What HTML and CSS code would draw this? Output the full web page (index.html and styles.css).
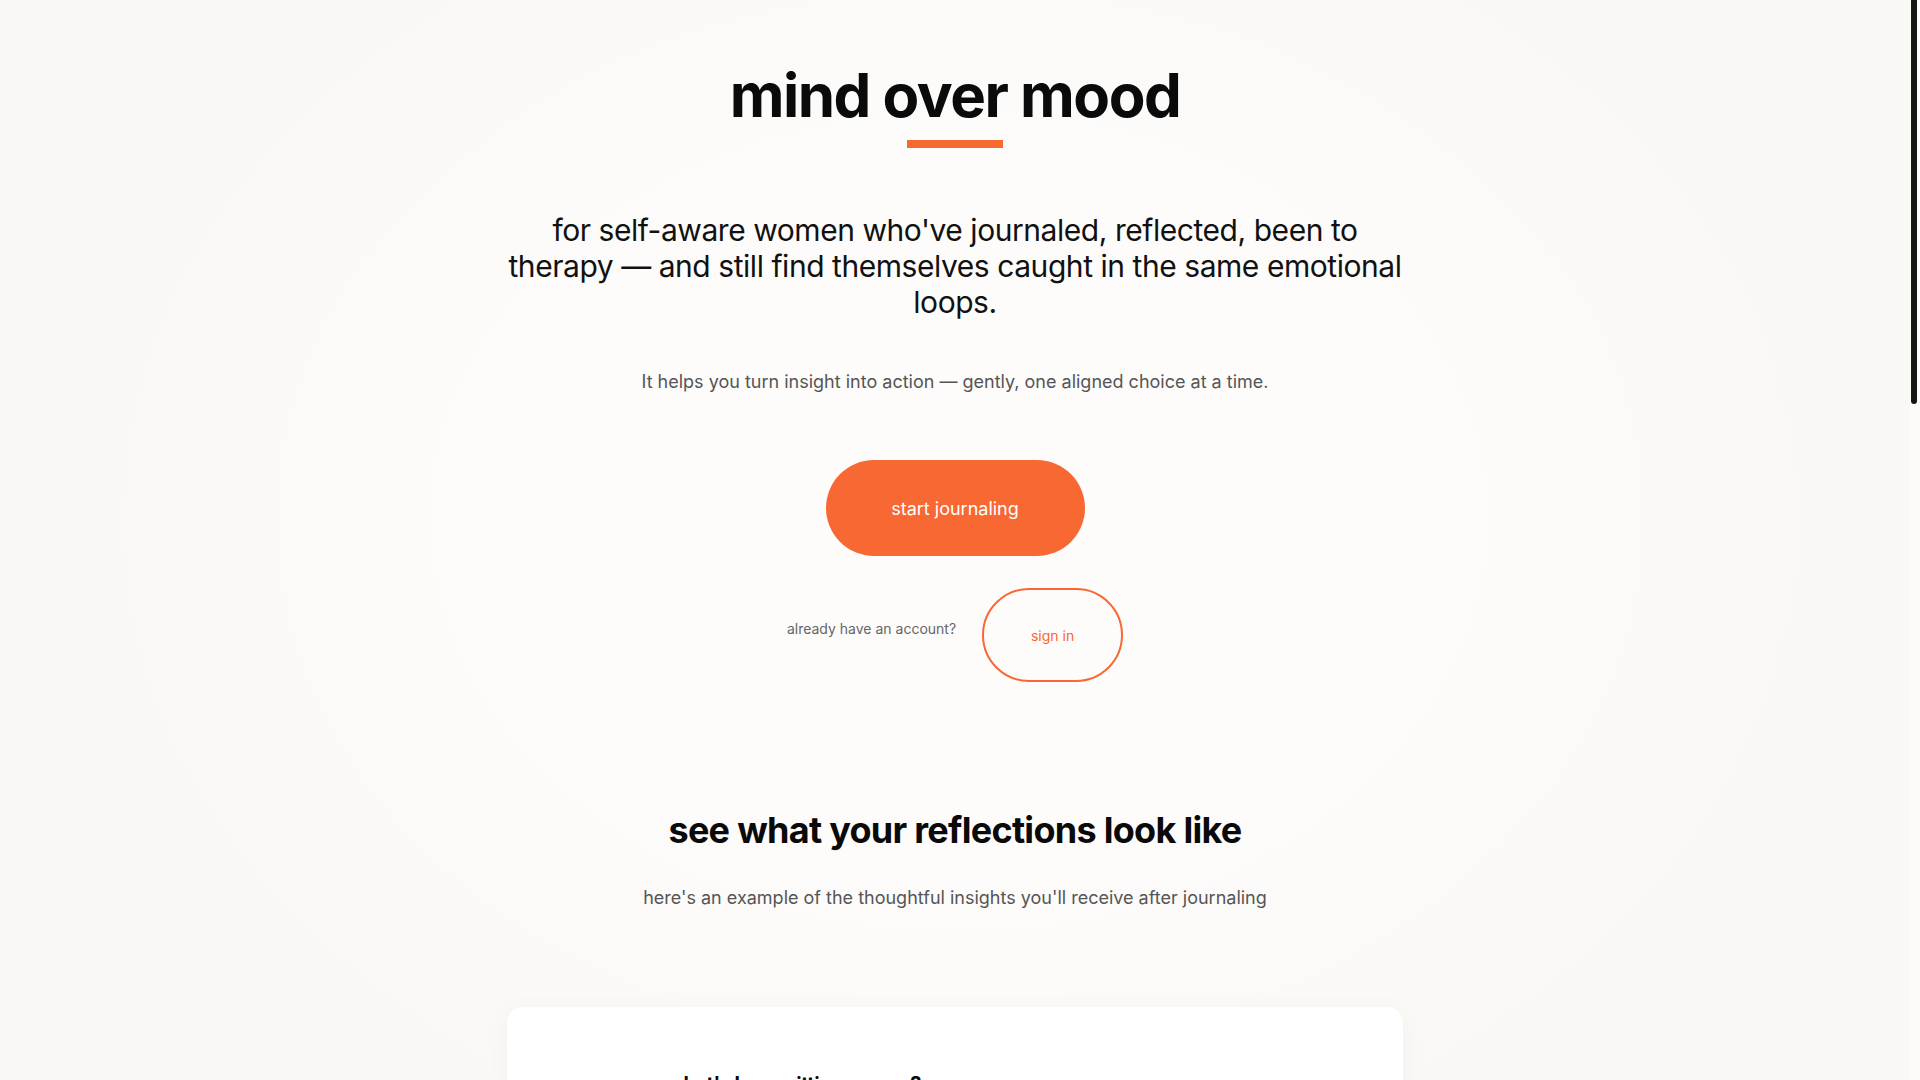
FILE: index.html
```html
<!DOCTYPE html>
<html lang="en">
<head>
<meta charset="utf-8">
<title>mind over mood</title>
<link rel="stylesheet" href="styles.css">
</head>
<body>
<main class="page">
  <section class="hero">
    <h1 class="title">mind over mood</h1>
    <div class="title-bar"></div>
    <p class="lead">for self-aware women who've journaled, reflected, been to therapy — and still find themselves caught in the same emotional loops.</p>
    <p class="sub">It helps you turn insight into action — gently, one aligned choice at a time.</p>
    <a class="btn-primary" href="#">start journaling</a>
    <div class="signin-row">
      <span class="signin-label">already have an account?</span>
      <a class="btn-outline" href="#">sign in</a>
    </div>
  </section>

  <section class="example">
    <h2 class="example-title">see what your reflections look like</h2>
    <p class="example-sub">here's an example of the thoughtful insights you'll receive after journaling</p>
    <div class="card">
      <div class="card-inner">
        <h3 class="card-title">what's been sitting on you?</h3>
        <p class="card-entry">"I keep saying yes to things I don't want to do, and then I resent everyone for it. I know it's a pattern. I've talked about it in therapy. But when someone asks, the yes just comes out."</p>
        <h4 class="card-label">what we noticed</h4>
        <p class="card-text">You're not lacking awareness — you can name the pattern clearly. What's happening is that the moment of choosing moves faster than your insight does.</p>
        <h4 class="card-label">one aligned choice</h4>
        <p class="card-text">Next time someone asks, try a pause phrase: "let me check and get back to you." It gives your insight time to catch up with you.</p>
      </div>
    </div>
  </section>
</main>
<div class="scrollbar"><div class="scrollbar-thumb"></div></div>
</body>
</html>
```

FILE: styles.css
```css
html {
  background: #fbfaf8;
}

body {
  margin: 0;
  padding-right: 10px;
  font-family: Inter, "Noto Sans", "Liberation Sans", sans-serif;
  color: #0a0a0a;
  background: radial-gradient(ellipse 900px 700px at 50% 520px, #fdfcfb 45%, #f9f8f5 100%);
}

.scrollbar {
  position: fixed;
  top: 0;
  right: 0;
  width: 10px;
  height: 100vh;
  background: #fcfbf9;
}

.scrollbar-thumb {
  margin-left: 1px;
  width: 6px;
  height: 404px;
  border-radius: 0 0 3px 3px;
  background: #141414;
}

.page {
  padding-bottom: 900px;
}

.hero {
  display: flex;
  flex-direction: column;
  align-items: center;
  text-align: center;
  padding-top: 65px;
}

.title {
  margin: 0;
  font-size: 60px;
  line-height: 60px;
  font-weight: 700;
  letter-spacing: -0.025em;
  color: #0a0a0a;
}

.title-bar {
  width: 96px;
  height: 8px;
  margin-top: 15px;
  background: #f76833;
}

.lead {
  margin: 64px 0 0;
  max-width: 900px;
  font-size: 30px;
  line-height: 36px;
  font-weight: 400;
  letter-spacing: -0.015em;
  color: #111;
}

.sub {
  margin: 48px 0 0;
  font-size: 18px;
  line-height: 28px;
  color: #555;
}

.btn-primary {
  margin-top: 64px;
  display: flex;
  align-items: center;
  justify-content: center;
  width: 259px;
  height: 96px;
  box-sizing: border-box;
  border-radius: 48px;
  background: #f76833;
  color: #fff;
  font-size: 18px;
  text-decoration: none;
}

.signin-row {
  margin-top: 32px;
  display: flex;
  align-items: center;
  gap: 26px;
}

.signin-label {
  font-size: 14px;
  line-height: 20px;
  color: #666;
  padding-bottom: 12px;
}

.btn-outline {
  display: flex;
  align-items: center;
  justify-content: center;
  width: 141px;
  height: 94px;
  box-sizing: border-box;
  border: 2px solid #f76833;
  border-radius: 47px;
  color: #f76833;
  font-size: 14px;
  text-decoration: none;
}

.example {
  display: flex;
  flex-direction: column;
  align-items: center;
  text-align: center;
  margin-top: 128px;
}

.example-title {
  margin: 0;
  font-size: 36px;
  line-height: 40px;
  font-weight: 700;
  letter-spacing: -0.02em;
  color: #0a0a0a;
}

.example-sub {
  margin: 34px 0 0;
  font-size: 18px;
  line-height: 28px;
  color: #555;
}

.card {
  margin-top: 95px;
  width: 896px;
  box-sizing: border-box;
  background: #fff;
  border-radius: 16px;
  box-shadow: 0 4px 24px rgba(0, 0, 0, 0.04);
  padding: 63px 48px 64px;
  text-align: left;
}

.card-inner {
  max-width: 576px;
  margin: 0 auto;
}

.card-title {
  margin: 0;
  font-size: 20px;
  line-height: 28px;
  font-weight: 700;
  letter-spacing: -0.025em;
  color: #0a0a0a;
}

.card-entry {
  margin: 24px 0 0;
  font-size: 16px;
  line-height: 26px;
  color: #444;
  font-style: italic;
}

.card-label {
  margin: 32px 0 0;
  font-size: 14px;
  line-height: 20px;
  font-weight: 600;
  color: #f76833;
}

.card-text {
  margin: 8px 0 0;
  font-size: 16px;
  line-height: 26px;
  color: #333;
}
```
